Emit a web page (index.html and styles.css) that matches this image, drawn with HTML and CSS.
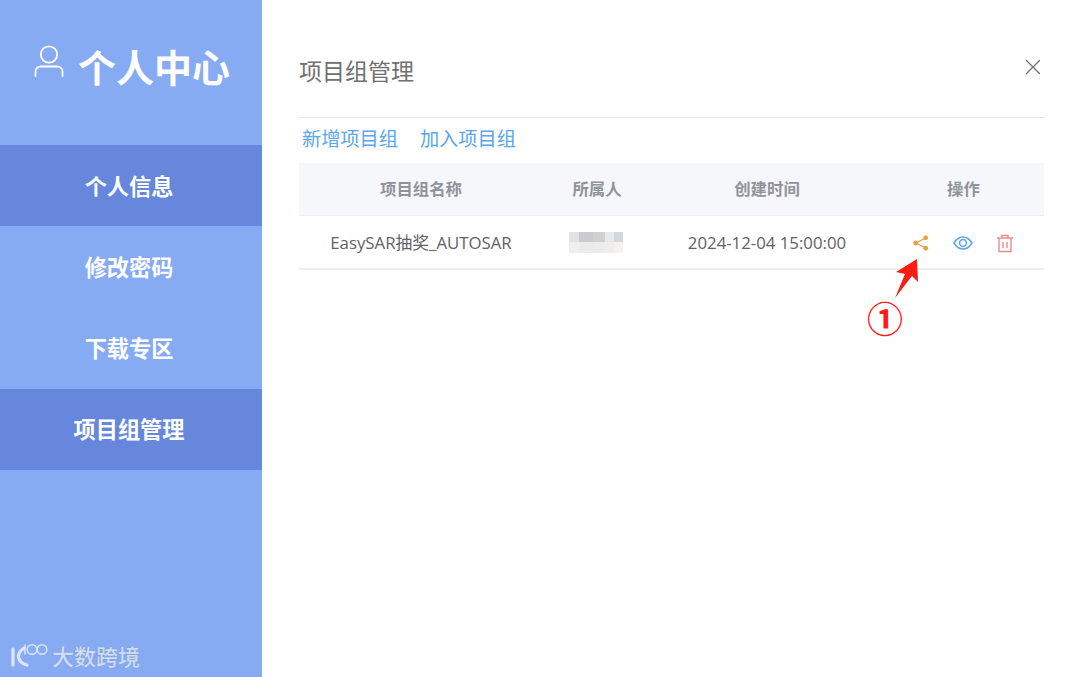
FILE: index.html
```html
<!DOCTYPE html>
<html lang="zh-CN">
<head>
<meta charset="utf-8">
<title>个人中心</title>
<link rel="stylesheet" href="styles.css">
</head>
<body>
<div class="app">
  <aside class="sidebar">
    <div class="brand">
      <svg class="brand-icon" width="30" height="34" viewBox="0 0 30 34" fill="none" stroke="#fff" stroke-width="1.8" stroke-linecap="round">
        <circle cx="15" cy="10.5" r="8.2"/>
        <path d="M1.5 32v-4.5a5 5 0 0 1 5-5h17a5 5 0 0 1 5 5V32"/>
      </svg>
      <span class="brand-text">个人中心</span>
    </div>
    <nav class="nav">
      <a class="nav-item active">个人信息</a>
      <a class="nav-item">修改密码</a>
      <a class="nav-item">下载专区</a>
      <a class="nav-item active">项目组管理</a>
    </nav>
    <div class="watermark">
      <svg width="40" height="26" viewBox="0 0 40 26" fill="none" stroke="#dce7f9" stroke-linecap="round">
        <path d="M4 7v16" stroke-width="3.2"/>
        <path d="M15 6C11 9 9 12 9.500 15c.6 4 4 7 8.500 8" stroke-width="3.200"/>
        <path d="M16 3v9" stroke-width="1.400"/>
        <circle cx="23" cy="7.500" r="4.800" stroke-width="1.400"/>
        <circle cx="33" cy="7.500" r="4.800" stroke-width="1.400"/>
      </svg>
      <span class="watermark-text">大数跨境</span>
    </div>
  </aside>
  <main class="main">
    <header class="head">
      <h1 class="title">项目组管理</h1>
      <svg class="close" width="16" height="16" viewBox="0 0 16 16" stroke="#707070" stroke-width="1.3" stroke-linecap="round">
        <path d="M1.500 1.500l13 13M14.500 1.500l-13 13"/>
      </svg>
    </header>
    <div class="actions">
      <a class="link">新增项目组</a>
      <a class="link">加入项目组</a>
    </div>
    <div class="table">
      <div class="row row-head">
        <div class="cell">项目组名称</div>
        <div class="cell">所属人</div>
        <div class="cell">创建时间</div>
        <div class="cell">操作</div>
      </div>
      <div class="row row-body">
        <div class="cell">EasySAR抽奖_AUTOSAR</div>
        <div class="cell"><span class="blur"><i class="b1"></i><i class="b2"></i><i class="b3"></i><i class="b4"></i><i class="b5"></i><i class="b6"></i><i class="b7"></i><i class="b8"></i><i class="b9"></i><i class="b10"></i></span></div>
        <div class="cell">2024-12-04 15:00:00</div>
        <div class="cell ops">
          <svg width="18" height="18" viewBox="0 0 18 18" fill="#e3a340" stroke="#e3a340" stroke-width="1.200">
            <path d="M13.500 4L4 9l9.500 5" fill="none"/>
            <circle cx="13.700" cy="3.800" r="2.400" stroke="none"/>
            <circle cx="3.600" cy="9" r="2.400" stroke="none"/>
            <circle cx="13.700" cy="14.200" r="2.400" stroke="none"/>
          </svg>
          <svg width="20" height="16" viewBox="0 0 20 16" fill="none" stroke="#5aa5ef" stroke-width="1.500">
            <path d="M1 8c2.400-4 5.400-6 9-6s6.600 2 9 6c-2.400 4-5.400 6-9 6s-6.600-2-9-6z"/>
            <circle cx="10" cy="8" r="3.400"/>
          </svg>
          <svg width="18" height="19" viewBox="0 0 18 19" fill="none" stroke="#f08a8a" stroke-width="1.400">
            <path d="M1 4h16M6 4V1.500h6V4M3 4v13.500h12V4M7 8v6M11 8v6"/>
          </svg>
        </div>
      </div>
    </div>
  </main>
</div>
<div class="note">
  <svg class="arrow" width="26" height="42" viewBox="0 0 26 42">
    <path d="M23 1L24 24 18 18 1 40 11 16 2 14z" fill="#fb1c14"/>
  </svg>
  <span class="note-num">①</span>
</div>
</body>
</html>
```
FILE: styles.css
```css
* { box-sizing: border-box; }
html, body { margin: 0; height: 100%; }
body {
  position: relative;
  background: #fff;
  overflow: hidden;
  font-family: "Open Sans", "Noto Sans CJK SC", sans-serif;
}
.app { display: flex; height: 677px; }

.sidebar {
  position: relative;
  width: 262px;
  flex: none;
  background: #87abf2;
  display: flex;
  flex-direction: column;
}
.brand {
  height: 145px;
  display: flex;
  align-items: flex-start;
  padding: 39px 0 0 34px;
  gap: 14px;
  color: #fff;
}
.brand-icon { margin-top: 5px; }
.brand-text {
  font: 700 38px/54px "Noto Sans CJK SC", sans-serif;
}
.nav { display: flex; flex-direction: column; }
.nav-item {
  height: 81.300px;
  display: flex;
  align-items: center;
  justify-content: center;
  padding: 0 4px 2px 0;
  color: #fff;
  font: 700 22.200px/1 "Noto Sans CJK SC", sans-serif;
}
.nav-item.active { background: #6687dc; }
.watermark {
  position: absolute;
  left: 9px;
  bottom: 8px;
  display: flex;
  align-items: center;
  gap: 3px;
}
.watermark-text {
  font: 500 22px/28px "Noto Sans CJK SC", sans-serif;
  color: #dbe6f8;
  text-shadow: 0 0 1px #6f7f9c;
  opacity: .85;
}

.main {
  flex: 1;
  padding: 0 36px 0 37px;
  display: flex;
  flex-direction: column;
}
.head {
  height: 118px;
  border-bottom: 1px solid #e4e7ed;
  display: flex;
  justify-content: space-between;
  padding-top: 53px;
}
.title {
  margin: 0;
  font: 400 23px/34px "Noto Sans CJK SC", sans-serif;
  color: #707070;
}
.close { margin: 6px 3px 0 0; }
.actions {
  height: 45px;
  display: flex;
  gap: 22px;
  padding: 5px 0 0 3px;
}
.link {
  font: 400 19.200px/30px "Noto Sans CJK SC", sans-serif;
  color: #5aa5ef;
}
.row {
  display: grid;
  grid-template-columns: 244px 108px 232px 161px;
  align-items: center;
  text-align: center;
}
.row-head {
  height: 53px;
  background: #f5f7fa;
  border-bottom: 1px solid #ebeef5;
  padding-bottom: 2px;
  font: 700 16.400px/1 "Noto Sans CJK SC", sans-serif;
  color: #909399;
}
.row-body {
  height: 54px;
  border-bottom: 2px solid #ebeef5;
  font-size: 16.800px;
  color: #606266;
}
.blur {
  display: grid;
  grid-template-columns: 10px 14px 12px 9px 9px;
  grid-template-rows: 10px 11px;
  width: 54px;
  margin-left: 26px;
}
.blur i { display: block; }
.b1 { background: #e2e2e2; }
.b2 { background: #c9cbd0; }
.b3 { background: #cfd0d2; }
.b4 { background: #e8e8e8; }
.b5 { background: #d3d7db; }
.b6 { background: #efefef; }
.b7 { background: #ebebeb; }
.b8 { background: #ececec; }
.b9 { background: #eeeeee; }
.b10 { background: #f5f2f0; }
.ops {
  display: flex;
  align-items: center;
  justify-content: center;
  gap: 23px;
  padding: 2px 2px 0 0;
}
.note {
  position: absolute;
  left: 867px;
  top: 258px;
  width: 44px;
}
.arrow { display: block; margin-left: 27px; }
.note-num {
  position: absolute;
  left: 0;
  top: 38px;
  font: 700 36px/42px "Noto Sans CJK SC", sans-serif;
  color: #fb1c14;
}
```
